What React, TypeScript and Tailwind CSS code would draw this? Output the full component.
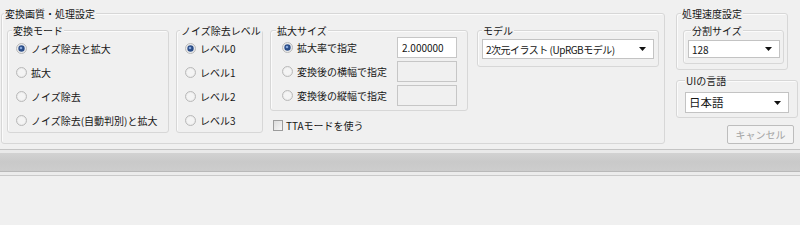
import React from 'react';

const font = '"Noto Sans CJK JP", "Noto Sans", "Liberation Sans", sans-serif';

function Group({
  label,
  className = '',
  labelClass = 'ml-[4px]',
  children,
}: {
  label: string;
  className?: string;
  labelClass?: string;
  children?: React.ReactNode;
}) {
  return (
    <div
      className={`rounded-[3px] border border-[#d7d7d7] shadow-[inset_1px_1px_0_#fbfbfb] ${className}`}
    >
      <div className={`-mt-[7px] w-fit bg-[#f0f0f0] px-[1px] leading-[13px] ${labelClass}`}>{label}</div>
      {children}
    </div>
  );
}

function Radio({ label, checked = false }: { label: string; checked?: boolean }) {
  return (
    <div className="flex h-[20px] items-center gap-[4px]">
      <svg width="11" height="11" viewBox="0 0 11 11" className="shrink-0">
        <circle cx="5.5" cy="5.5" r="5" fill="#ebebeb" stroke="#b9b9b9" />
        <circle cx="5.5" cy="5.5" r="3.6" fill="#f4f4f4" />
        {checked && <circle cx="5.5" cy="5.5" r="3.2" fill="#2b4d88" />}
        {checked && <circle cx="5" cy="5" r="1.3" fill="#86a8dc" />}
      </svg>
      <span className="whitespace-nowrap leading-[13px]">{label}</span>
    </div>
  );
}

function Combo({ value, className = '', textClass = '' }: { value: string; className?: string; textClass?: string }) {
  return (
    <div
      className={`flex items-center justify-between border border-[#c3c3c3] bg-white pl-[3px] pr-[7px] ${className}`}
    >
      <span className={`whitespace-nowrap leading-[13px] ${textClass}`}>{value}</span>
      <svg width="7" height="4" viewBox="0 0 7 4">
        <path d="M0 0 H7 L3.5 4 Z" fill="#111" />
      </svg>
    </div>
  );
}

export default function App() {
  return (
    <div
      className="flex h-[225px] w-[800px] flex-col overflow-hidden bg-[#f0f0f0] text-[10px] text-[#161616]"
      style={{ fontFamily: font }}
    >
      <div className="flex h-[144px]">
        {/* 変換画質・処理設定 */}
        <Group
          label="変換画質・処理設定"
          className="ml-[1px] mt-[13px] h-[131px] w-[664px]"
          labelClass="ml-[2px]"
        >
          <div className="mt-[10px] flex items-start pl-[5px]">
            <Group label="変換モード" className="h-[103px] w-[162px]" labelClass="ml-[4px]">
              <div className="mt-[1px] flex flex-col gap-[4px] pl-[8px]">
                <Radio label="ノイズ除去と拡大" checked />
                <Radio label="拡大" />
                <Radio label="ノイズ除去" />
                <Radio label="ノイズ除去(自動判別)と拡大" />
              </div>
            </Group>

            <Group label="ノイズ除去レベル" className="ml-[7px] h-[103px] w-[87px]" labelClass="ml-[3px]">
              <div className="mt-[1px] flex flex-col gap-[4px] pl-[8px]">
                <Radio label="レベル0" checked />
                <Radio label="レベル1" />
                <Radio label="レベル2" />
                <Radio label="レベル3" />
              </div>
            </Group>

            <div className="ml-[7px] flex flex-col">
              <Group label="拡大サイズ" className="h-[81px] w-[198px]" labelClass="ml-[5px]">
                <div className="flex flex-col gap-[3px] pl-[11px] pr-[10px]">
                  <div className="flex h-[21px] items-center justify-between">
                    <Radio label="拡大率で指定" checked />
                    <div className="flex h-[21px] w-[60px] items-center border border-[#c6c6c6] bg-white pl-[4px] leading-[13px]">
                      2.000000
                    </div>
                  </div>
                  <div className="flex h-[21px] items-center justify-between">
                    <Radio label="変換後の横幅で指定" />
                    <div className="h-[21px] w-[60px] border border-[#c6c6c6] bg-[#f0f0f0]" />
                  </div>
                  <div className="flex h-[21px] items-center justify-between">
                    <Radio label="変換後の縦幅で指定" />
                    <div className="h-[21px] w-[60px] border border-[#c6c6c6] bg-[#f0f0f0]" />
                  </div>
                </div>
              </Group>
              <div className="ml-[3px] mt-[9px] flex h-[11px] items-center gap-[3px]">
                <div className="h-[11px] w-[10px] border border-[#9c9c9c] bg-gradient-to-br from-[#dcdcdc] to-[#f6f6f6]" />
                <span className="whitespace-nowrap leading-[13px]">TTAモードを使う</span>
              </div>
            </div>

            <Group label="モデル" className="ml-[9px] h-[37px] w-[182px]" labelClass="ml-[4px]">
              <div className="mt-[2px] pl-[4px]">
                <Combo
                  value="2次元イラスト (UpRGBモデル)"
                  className="h-[20px] w-[172px]"
                  textClass="tracking-[-0.5px]"
                />
              </div>
            </Group>
          </div>
        </Group>

        {/* right column */}
        <div className="ml-[11px] flex flex-col">
          <Group label="処理速度設定" className="mt-[13px] h-[57px] w-[112px]" labelClass="ml-[4px]">
            <div className="mt-[10px] pl-[6px]">
              <Group label="分割サイズ" className="h-[34px] w-[101px]" labelClass="ml-[7px]">
                <div className="mt-[3px] pl-[4px]">
                  <Combo value="128" className="h-[18px] w-[92px]" />
                </div>
              </Group>
            </div>
          </Group>

          <Group label="UIの言語" className="mt-[10px] h-[38px] w-[122px]" labelClass="ml-[8px]">
            <div className="mt-[5px] pl-[8px]">
              <Combo value="日本語" className="h-[21px] w-[104px]" textClass="text-[11.5px]" />
            </div>
          </Group>

          <button
            disabled
            className="ml-[51px] mt-[7px] flex h-[19px] w-[67px] items-center justify-center rounded-[2px] border border-[#bdbdbd] bg-[#f4f4f4] leading-[13px] text-[#a3a3a3]"
          >
            キャンセル
          </button>
        </div>
      </div>

      {/* progress bar */}
      <div className="mt-[5px] flex flex-col">
        <div className="h-[1px] bg-[#c4c4c4]" />
        <div className="h-[3px] bg-[#e9e9e9]" />
        <div className="h-[18px] bg-gradient-to-b from-[#d2d2d2] via-[#c9c9c9] to-[#cdcdcd]" />
        <div className="h-[1px] bg-[#b9b9b9]" />
        <div className="h-[3px] bg-[#ececec]" />
        <div className="h-[1px] bg-[#cacaca]" />
      </div>
    </div>
  );
}
